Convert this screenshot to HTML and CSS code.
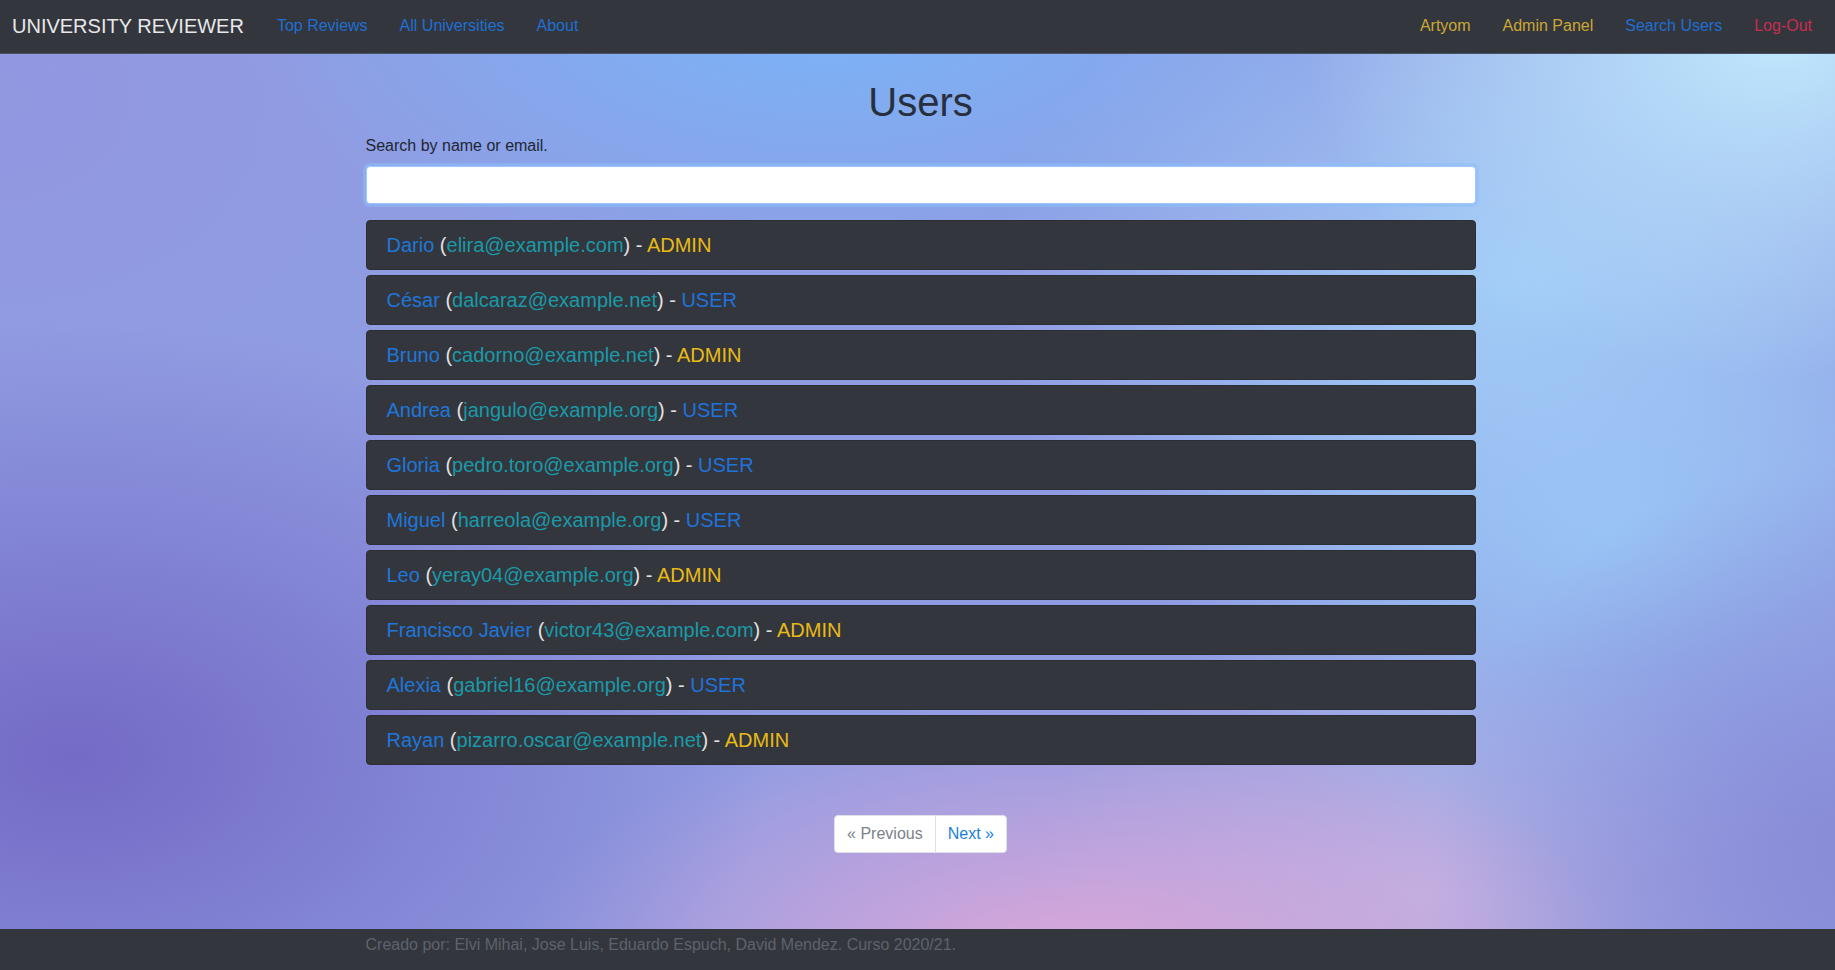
FILE: index.html
```html
<!DOCTYPE html>
<html lang="es">
<head>
<meta charset="utf-8">
<title>University Reviewer - Users</title>
<link rel="stylesheet" href="styles.css">
</head>
<body>
<div class="page">
  <nav class="navbar">
    <a class="brand" href="#">UNIVERSITY REVIEWER</a>
    <ul class="nav">
      <li><a class="nav-link c-blue" href="#">Top Reviews</a></li>
      <li><a class="nav-link c-blue" href="#">All Universities</a></li>
      <li><a class="nav-link c-blue" href="#">About</a></li>
    </ul>
    <ul class="nav nav-right">
      <li><a class="nav-link c-yellow" href="#">Artyom</a></li>
      <li><a class="nav-link c-yellow" href="#">Admin Panel</a></li>
      <li><a class="nav-link c-blue" href="#">Search Users</a></li>
      <li><a class="nav-link c-red" href="#">Log-Out</a></li>
    </ul>
  </nav>

  <main class="main">
    <div class="container">
      <h1 class="title">Users</h1>
      <label class="label" for="q">Search by name or email.</label>
      <input class="search" id="q" type="text">

      <ul class="user-list">
        <li class="user"><span class="line"><a class="u-name" href="#">Dario</a> (<a class="u-mail" href="#">elira@example.com</a>) - <span class="r-admin">ADMIN</span></span></li>
        <li class="user"><span class="line"><a class="u-name" href="#">César</a> (<a class="u-mail" href="#">dalcaraz@example.net</a>) - <span class="r-user">USER</span></span></li>
        <li class="user"><span class="line"><a class="u-name" href="#">Bruno</a> (<a class="u-mail" href="#">cadorno@example.net</a>) - <span class="r-admin">ADMIN</span></span></li>
        <li class="user"><span class="line"><a class="u-name" href="#">Andrea</a> (<a class="u-mail" href="#">jangulo@example.org</a>) - <span class="r-user">USER</span></span></li>
        <li class="user"><span class="line"><a class="u-name" href="#">Gloria</a> (<a class="u-mail" href="#">pedro.toro@example.org</a>) - <span class="r-user">USER</span></span></li>
        <li class="user"><span class="line"><a class="u-name" href="#">Miguel</a> (<a class="u-mail" href="#">harreola@example.org</a>) - <span class="r-user">USER</span></span></li>
        <li class="user"><span class="line"><a class="u-name" href="#">Leo</a> (<a class="u-mail" href="#">yeray04@example.org</a>) - <span class="r-admin">ADMIN</span></span></li>
        <li class="user"><span class="line"><a class="u-name" href="#">Francisco Javier</a> (<a class="u-mail" href="#">victor43@example.com</a>) - <span class="r-admin">ADMIN</span></span></li>
        <li class="user"><span class="line"><a class="u-name" href="#">Alexia</a> (<a class="u-mail" href="#">gabriel16@example.org</a>) - <span class="r-user">USER</span></span></li>
        <li class="user"><span class="line"><a class="u-name" href="#">Rayan</a> (<a class="u-mail" href="#">pizarro.oscar@example.net</a>) - <span class="r-admin">ADMIN</span></span></li>
      </ul>

      <div class="pager-wrap">
        <ul class="pager">
          <li><span class="page-link disabled">« Previous</span></li>
          <li><a class="page-link" href="#">Next »</a></li>
        </ul>
      </div>
    </div>
  </main>

  <footer class="footer">
    <div class="container">
      <span class="footer-text">Creado por: Elvi Mihai, Jose Luis, Eduardo Espuch, David Mendez. Curso 2020/21.</span>
    </div>
  </footer>
</div>
</body>
</html>
```

FILE: styles.css
```css
* { box-sizing: border-box; }

html, body {
  margin: 0;
  padding: 0;
}

body {
  font-family: "Liberation Sans", Arial, Helvetica, sans-serif;
  font-size: 16px;
  line-height: 1.5;
  color: #212529;
}

a { text-decoration: none; }

.page {
  min-height: 970px;
  display: flex;
  flex-direction: column;
  background-color: #909ce2;
  background-image:
    radial-gradient(ellipse 38% 45% at 4% 78%, rgba(114, 104, 196, 0.95), rgba(114, 104, 196, 0) 100%),
    radial-gradient(ellipse 30% 28% at 58% 100%, rgba(226, 168, 216, 0.95), rgba(226, 168, 216, 0) 100%),
    radial-gradient(ellipse 26% 36% at 97% 3%, rgba(192, 234, 253, 1), rgba(192, 234, 253, 0) 100%),
    radial-gradient(ellipse 32% 30% at 45% 0%, rgba(120, 182, 250, 0.95), rgba(120, 182, 250, 0) 100%),
    radial-gradient(ellipse 22% 40% at 100% 88%, rgba(136, 138, 214, 0.9), rgba(136, 138, 214, 0) 100%),
    radial-gradient(ellipse 28% 40% at 82% 30%, rgba(162, 206, 248, 0.95), rgba(162, 206, 248, 0) 100%),
    radial-gradient(ellipse 25% 35% at 88% 55%, rgba(150, 196, 245, 0.85), rgba(150, 196, 245, 0) 100%),
    radial-gradient(ellipse 22% 30% at 78% 92%, rgba(190, 178, 226, 0.9), rgba(190, 178, 226, 0) 100%),
    radial-gradient(ellipse 20% 30% at 0% 10%, rgba(146, 150, 224, 0.9), rgba(146, 150, 224, 0) 100%);
}

/* Navbar */
.navbar {
  height: 54px;
  display: flex;
  align-items: center;
  padding: 0 7px 2px 12px;
  background: #33363d;
  border-bottom: 1px solid #4a5266;
}

.brand {
  font-size: 20px;
  line-height: 30px;
  color: #e8e8ea;
  margin-right: 17px;
}

.nav {
  list-style: none;
  margin: 0;
  padding: 0;
  display: flex;
}

.nav-right { margin-left: auto; }

.nav-link {
  display: block;
  padding: 0 16px;
  font-size: 16px;
  line-height: 24px;
}

.c-blue { color: #1f6fd3; }
.c-yellow { color: #cba735; }
.c-red { color: #c72d50; }

/* Main */
.main {
  flex: 1;
}

.container {
  width: 1140px;
  margin: 0 auto;
  padding: 0 12px 0 18px;
}

.title {
  margin: 24px 0 8px;
  font-size: 40px;
  font-weight: 500;
  line-height: 48px;
  text-align: center;
  color: #27303c;
}

.label {
  display: block;
  margin-bottom: 8px;
  font-size: 16px;
  line-height: 24px;
  color: #1f2633;
}

.search {
  display: block;
  width: 100%;
  height: 38px;
  padding: 6px 12px;
  font-size: 16px;
  border: 1px solid #9cc8fb;
  border-radius: 4px;
  background: #fff;
  box-shadow: 0 0 0 3px rgba(140, 190, 250, 0.55);
  outline: none;
}

.user-list {
  list-style: none;
  margin: 16px 0 0;
  padding: 0;
  display: flex;
  flex-direction: column;
  gap: 5px;
}

.user {
  height: 50px;
  display: flex;
  align-items: center;
  padding: 0 20px;
  background: #33363d;
  border: 1px solid #2b2e34;
  border-radius: 4px;
  font-size: 20px;
  line-height: 30px;
  color: #e2e2e4;
}

.line { white-space: nowrap; }

.u-name { color: #1f76da; }
.u-mail { color: #1a9aa8; }
.r-admin { color: #e9ba15; }
.r-user { color: #1f72dc; }

.pager-wrap {
  display: flex;
  justify-content: center;
  margin-top: 50px;
}

.pager {
  list-style: none;
  margin: 0;
  padding: 0;
  display: flex;
}

.page-link {
  display: block;
  padding: 8px 12px;
  font-size: 16px;
  line-height: 20px;
  background: #fff;
  border: 1px solid #dee2e6;
  color: #1b7fe0;
}

.pager li:first-child .page-link {
  border-radius: 4px 0 0 4px;
}

.pager li:last-child .page-link {
  margin-left: -1px;
  border-radius: 0 4px 4px 0;
}

.page-link.disabled { color: #7a828a; }

/* Footer */
.footer {
  height: 41px;
  background: #33363d;
  padding-top: 4px;
}

.footer-text {
  font-size: 16px;
  line-height: 24px;
  color: #5d636d;
}
```
